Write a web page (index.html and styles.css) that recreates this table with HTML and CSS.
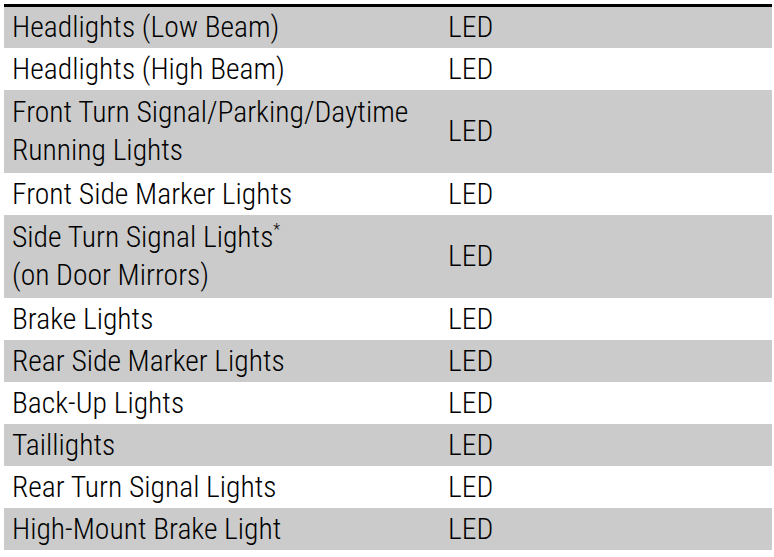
FILE: index.html
```html
<!DOCTYPE html>
<html lang="en">
<head>
<meta charset="utf-8">
<title>Exterior Lights</title>
<link rel="stylesheet" href="styles.css">
</head>
<body>
<table class="spec">
  <colgroup><col class="c-name"><col class="c-val"></colgroup>
  <tbody>
    <tr class="shade"><td>Headlights (Low Beam)</td><td>LED</td></tr>
    <tr><td>Headlights (High Beam)</td><td>LED</td></tr>
    <tr class="shade tall"><td>Front Turn Signal/Parking/Daytime<br>Running Lights</td><td>LED</td></tr>
    <tr><td>Front Side Marker Lights</td><td>LED</td></tr>
    <tr class="shade tall"><td>Side Turn Signal Lights<sup class="ast">*</sup><br>(on Door Mirrors)</td><td>LED</td></tr>
    <tr><td>Brake Lights</td><td>LED</td></tr>
    <tr class="shade"><td>Rear Side Marker Lights</td><td>LED</td></tr>
    <tr><td>Back-Up Lights</td><td>LED</td></tr>
    <tr class="shade"><td>Taillights</td><td>LED</td></tr>
    <tr><td>Rear Turn Signal Lights</td><td>LED</td></tr>
    <tr class="shade"><td>High-Mount Brake Light</td><td>LED</td></tr>
  </tbody>
</table>
</body>
</html>
```
FILE: styles.css
```css
html, body {
  margin: 0;
  padding: 0;
  background: #ffffff;
}
body {
  padding: 4px;
}
.spec {
  width: 768px;
  border-collapse: collapse;
  border-top: 3px solid #000;
  table-layout: fixed;
  font-family: "Roboto Condensed", "Roboto", sans-serif;
  font-stretch: condensed;
  font-weight: 300;
  font-size: 29.6px;
  line-height: 38px;
  color: #000;
}
.c-name { width: 436px; }
.c-val { width: 332px; }
.spec tr { height: 42px; }
.spec tr.tall { height: 83px; }
.spec td {
  padding: 0 8px;
  vertical-align: middle;
  white-space: nowrap;
}
.spec tr.shade td { background: #cbcbcb; }
.ast {
  font-size: 16px;
  line-height: 0;
  vertical-align: 12px;
}
```
